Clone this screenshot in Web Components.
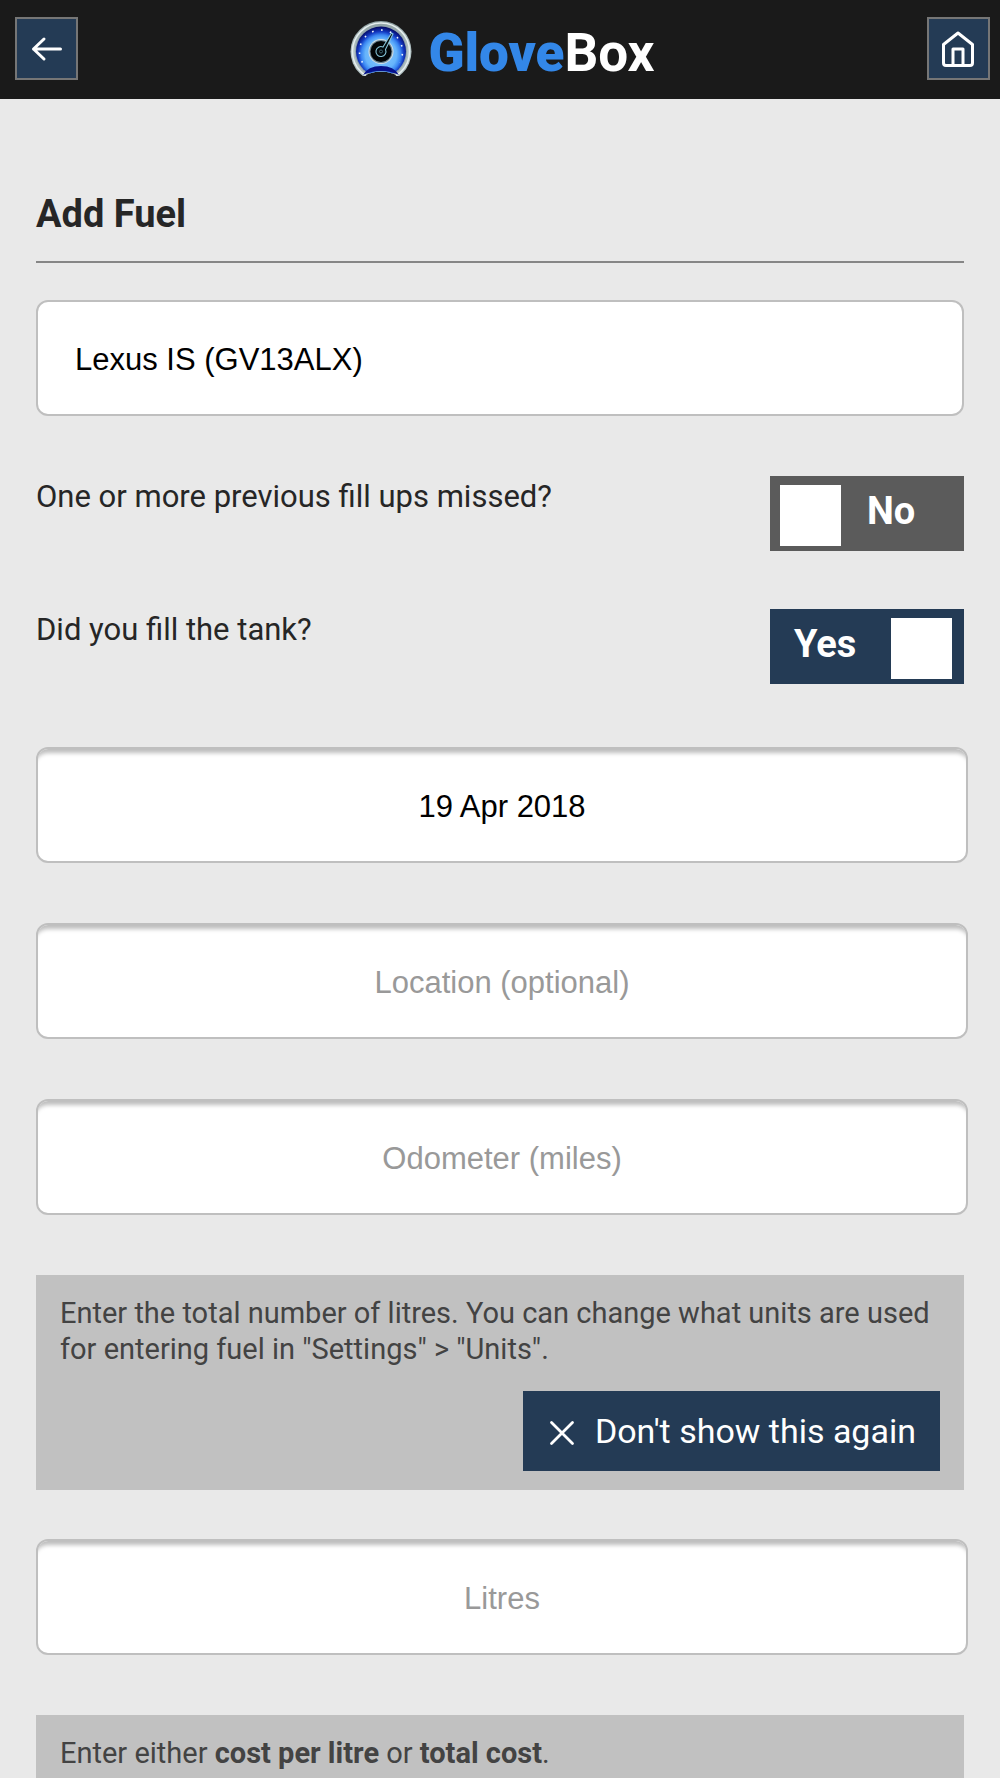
<!DOCTYPE html>
<html lang="en">
<head>
<meta charset="utf-8">
<meta name="viewport" content="width=device-width, initial-scale=1">
<title>GloveBox – Add Fuel</title>
<style>
  :root {
    --page: #e9e9e9;
    --ink: #262626;
    --navy: #243b55;
    --bar: #1a1a1a;
    --line: #bfbfbf;
    --note: #c1c1c1;
    --ui: Roboto, sans-serif;
    --field: "Liberation Sans", Helvetica, Arial, sans-serif;
  }
  body { margin: 0; background: var(--page); color: var(--ink); font-family: var(--ui); }
</style>
</head>
<body>
<glove-app></glove-app>

<script>
const define = (name, html, setup) => {
  const template = document.createElement('template');
  template.innerHTML = html;
  customElements.define(name, class extends HTMLElement {
    constructor() {
      super();
      this.attachShadow({ mode: 'open' }).append(template.content.cloneNode(true));
    }
    connectedCallback() { if (setup) setup(this, this.shadowRoot); }
  });
};

define('glove-gauge', `
<style>:host { display: block; width: 62px; height: 57px; } svg { display: block; }</style>
<svg width="62" height="57" viewBox="0 0 62 57" aria-hidden="true">
  <defs>
    <linearGradient id="rim" x1="0" y1="0" x2="0" y2="1">
      <stop offset="0" stop-color="#8fa0a2"/><stop offset=".5" stop-color="#b4c4c6"/><stop offset="1" stop-color="#a9b8ba"/>
    </linearGradient>
    <radialGradient id="dial" gradientUnits="userSpaceOnUse" cx="31" cy="34.500" r="28">
      <stop offset="0" stop-color="#8cc8ff"/><stop offset=".56" stop-color="#66b4fb"/>
      <stop offset=".7" stop-color="#3a86f2"/><stop offset=".82" stop-color="#1238c0"/><stop offset="1" stop-color="#03045c"/>
    </radialGradient>
    <clipPath id="cut"><path d="M0 0H62V50L50 56H47Q41 51.500 31 51.500Q21 51.500 15 56H12L0 50Z"/></clipPath>
  </defs>
  <g clip-path="url(#cut)">
    <circle cx="31" cy="31.500" r="30.500" fill="url(#rim)"/>
    <circle cx="31" cy="31.500" r="28.500" fill="none" stroke="#e6eeee" stroke-width="1.500"/>
    <circle cx="31" cy="31.500" r="26" fill="#8fa3ab"/>
    <circle cx="31" cy="31.500" r="25" fill="url(#dial)"/>
    <path d="M13 55Q18 46 31 46Q44 46 49 55Q41 51 31 51Q21 51 13 55Z" fill="#06128c"/>
    <path d="M12.500 42.500A21.500 21.500 0 1 1 49.500 42.500" fill="none" stroke="#eef6ff" stroke-width="1.600" stroke-dasharray="1.600 7.400"/>
  </g>
  <circle cx="31" cy="31.500" r="12.500" fill="#d5e0e4"/>
  <circle cx="31" cy="31.500" r="11.500" fill="#6b8493"/>
  <circle cx="31" cy="31.500" r="10.500" fill="#020507"/>
  <path d="M33 27L41.500 13L43 14L35.500 29.500A5 5 0 1 1 33 27Z" fill="#020a0e" stroke="#86c4d8" stroke-width="1.100"/>
  <circle cx="31" cy="31.500" r="1.500" fill="#020507" stroke="#5f97ab" stroke-width=".6"/>
</svg>`);

define('glove-icon-button', `
<style>
  :host { display: block; }
  button { display: grid; place-items: center; box-sizing: border-box; width: 63px; height: 63px; margin: 0; padding: 0;
    border: 2px solid #767676; border-radius: 0; background: var(--navy); color: #fff; }
  ::slotted(svg) { display: block; }
</style>
<button type="button"><slot></slot></button>`,
(host, root) => root.querySelector('button').setAttribute('aria-label', host.getAttribute('label')));

define('glove-header', `
<style>
  :host { display: block; flex: none; }
  header { display: flex; align-items: center; justify-content: space-between; box-sizing: border-box; height: 99px;
    padding: 0 10px 2px 15px; background: var(--bar); }
  .brand { display: flex; align-items: center; gap: 16px; font-size: 53px; line-height: 60px; font-weight: 700; color: #fff; }
  .brand b { color: #3387e8; }
  .name { padding-top: 8px; }
</style>
<header>
  <glove-icon-button label="Back">
    <svg width="32" height="26" viewBox="0 0 32 26" fill="none" stroke="#fff" stroke-width="3" stroke-linecap="round" stroke-linejoin="round"><path d="M29.500 13H2.500M13 3L2.500 13L13 23"/></svg>
  </glove-icon-button>
  <div class="brand"><glove-gauge></glove-gauge><span class="name"><b>Glove</b>Box</span></div>
  <glove-icon-button label="Home">
    <svg width="34" height="38" viewBox="0 0 34 38" fill="none" stroke="#fff" stroke-width="3" stroke-linejoin="round"><path d="M17 3L31.500 14.500V33Q31.500 35.500 29 35.500H5Q2.500 35.500 2.500 33V14.500Z"/><path d="M12 35V19H22V35"/></svg>
  </glove-icon-button>
</header>`);

define('glove-select', `
<style>
  :host { display: block; }
  select { display: block; appearance: none; box-sizing: border-box; width: 100%; height: 116px; margin: 0; padding: 4px 37px 0;
    border: 2px solid var(--line); border-radius: 12px; background: #fff; color: #000; font: 31px/36px var(--field); }
</style>
<select aria-label="Vehicle"><option>Lexus IS (GV13ALX)</option></select>`);

define('glove-field', `
<style>
  :host { display: block; margin-right: -4px; }
  input { display: block; box-sizing: border-box; width: 100%; height: 116px; margin: 0; padding: 4px 20px 0;
    border: 2px solid var(--line); border-radius: 12px; background: #fff; box-shadow: inset 0 8px 4px -4px #bdbdbd;
    color: #000; font: 31px/36px var(--field); text-align: center; }
  input::placeholder { color: #999; opacity: 1; }
</style>
<input type="text">`,
(host, root) => {
  const input = root.querySelector('input');
  input.setAttribute('aria-label', host.getAttribute('label'));
  input.placeholder = host.getAttribute('placeholder') || '';
  input.value = host.getAttribute('value') || '';
});

define('glove-toggle', `
<style>
  :host { display: flex; justify-content: space-between; align-items: flex-start; }
  .question { font-size: 31px; line-height: 42px; }
  .switch { display: flex; box-sizing: border-box; width: 194px; height: 75px; padding: 9px 12px 5px 10px;
    background: #5b5b5b; color: #fff; font-size: 38px; line-height: 52px; font-weight: 700; gap: 26px; }
  .switch:has(:checked) { flex-direction: row-reverse; justify-content: space-between; padding-left: 24px; background: var(--navy); }
  input { appearance: none; flex: none; width: 61px; height: 61px; margin: 0; border-radius: 0; background: #fff; }
</style>
<label class="question" for="box"><slot></slot></label>
<label class="switch"><input id="box" type="checkbox" role="switch"><span></span></label>`,
(host, root) => {
  const box = root.querySelector('input');
  const state = root.querySelector('span');
  const show = () => { state.textContent = box.checked ? 'Yes' : 'No'; };
  box.checked = host.hasAttribute('checked');
  box.addEventListener('change', show);
  show();
});

define('glove-note', `
<style>
  :host { display: block; padding: 20px 24px 19px; background: var(--note); color: #434343; font-size: 29px; line-height: 36px; }
  p { margin: 0; }
  ::slotted(glove-dismiss) { margin-top: 24px; }
</style>
<p><slot></slot></p><slot name="action"></slot>`);

define('glove-dismiss', `
<style>
  :host { display: flex; justify-content: flex-end; }
  button { display: flex; align-items: center; gap: 20px; height: 80px; margin: 0; padding: 0 24px 0 26px; border: 0;
    background: var(--navy); color: #fff; font: 34px/40px var(--ui); }
  svg { display: block; margin-top: 3px; }
</style>
<button type="button">
  <svg width="26" height="26" viewBox="0 0 26 26" fill="none" stroke="#fff" stroke-width="2.800" stroke-linecap="round" aria-hidden="true"><path d="M2.500 2.500L23.500 23.500M23.500 2.500L2.500 23.500"/></svg>
  <span><slot></slot></span>
</button>`);

define('glove-app', `
<style>
  :host { display: flex; flex-direction: column; height: 100vh; }
  main { flex: 1; min-height: 0; overflow-y: auto; scrollbar-width: none; padding: 0 36px; }
  h1 { margin: 93px 0 37px; padding-bottom: 25px; border-bottom: 2px solid #868686; font-size: 38px; line-height: 44px; font-weight: 700; }
  form { display: flex; flex-direction: column; gap: 60px; }
  .answers { display: flex; flex-direction: column; gap: 58px; padding-bottom: 3px; }
  .group { display: flex; flex-direction: column; gap: 49px; }
</style>
<glove-header></glove-header>
<main>
  <h1>Add Fuel</h1>
  <form>
    <glove-select></glove-select>
    <div class="answers">
      <glove-toggle>One or more previous fill ups missed?</glove-toggle>
      <glove-toggle checked>Did you fill the tank?</glove-toggle>
    </div>
    <glove-field label="Date" value="19 Apr 2018"></glove-field>
    <glove-field label="Location" placeholder="Location (optional)"></glove-field>
    <glove-field label="Odometer" placeholder="Odometer (miles)"></glove-field>
    <div class="group">
      <glove-note>Enter the total number of litres. You can change what units are used for entering fuel in "Settings" &gt; "Units".<glove-dismiss slot="action">Don't show this again</glove-dismiss></glove-note>
      <glove-field label="Litres" placeholder="Litres"></glove-field>
    </div>
    <glove-note>Enter either <strong>cost per litre</strong> or <strong>total cost</strong>.</glove-note>
  </form>
</main>`);
</script>
</body>
</html>
